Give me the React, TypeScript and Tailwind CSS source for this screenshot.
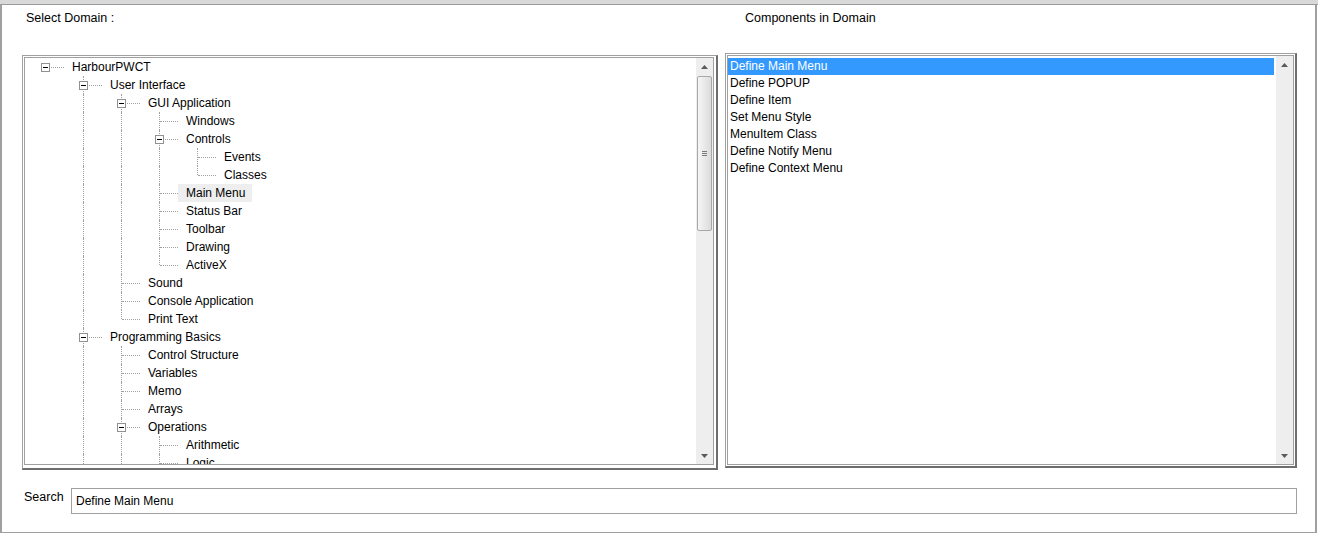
import React from "react";

type Row = {
  depth: number;
  label: string;
  box?: boolean;
  last?: boolean;
  guides: number[];
  active?: boolean;
};

const treeRows: Row[] = [
  { depth: 0, label: "HarbourPWCT", box: true, guides: [] },
  { depth: 1, label: "User Interface", box: true, guides: [0] },
  { depth: 2, label: "GUI Application", box: true, guides: [0, 1] },
  { depth: 3, label: "Windows", guides: [0, 1, 1] },
  { depth: 3, label: "Controls", box: true, guides: [0, 1, 1] },
  { depth: 4, label: "Events", guides: [0, 1, 1, 1] },
  { depth: 4, label: "Classes", last: true, guides: [0, 1, 1, 1] },
  { depth: 3, label: "Main Menu", active: true, guides: [0, 1, 1] },
  { depth: 3, label: "Status Bar", guides: [0, 1, 1] },
  { depth: 3, label: "Toolbar", guides: [0, 1, 1] },
  { depth: 3, label: "Drawing", guides: [0, 1, 1] },
  { depth: 3, label: "ActiveX", last: true, guides: [0, 1, 1] },
  { depth: 2, label: "Sound", guides: [0, 1] },
  { depth: 2, label: "Console Application", guides: [0, 1] },
  { depth: 2, label: "Print Text", last: true, guides: [0, 1] },
  { depth: 1, label: "Programming Basics", box: true, guides: [0] },
  { depth: 2, label: "Control Structure", guides: [0, 1] },
  { depth: 2, label: "Variables", guides: [0, 1] },
  { depth: 2, label: "Memo", guides: [0, 1] },
  { depth: 2, label: "Arrays", guides: [0, 1] },
  { depth: 2, label: "Operations", box: true, guides: [0, 1] },
  { depth: 3, label: "Arithmetic", guides: [0, 1, 1] },
  { depth: 3, label: "Logic", guides: [0, 1, 1] },
];

const components = [
  "Define Main Menu",
  "Define POPUP",
  "Define Item",
  "Set Menu Style",
  "MenuItem Class",
  "Define Notify Menu",
  "Define Context Menu",
];

const Arrow = ({ down }: { down?: boolean }) => (
  <svg width="7" height="4" viewBox="0 0 7 4">
    {down ? (
      <path d="M0 0 H7 L3.5 4 Z" fill="#5a5a5a" />
    ) : (
      <path d="M0 4 H7 L3.5 0 Z" fill="#5a5a5a" />
    )}
  </svg>
);

const TreeRow = ({ row }: { row: Row }) => (
  <div className="flex h-[18px]">
    {row.guides.map((g, i) => (
      <div key={i} className="relative w-[38px] shrink-0">
        {g ? (
          <span className="absolute left-[19px] top-0 h-full border-l border-dotted border-[#a0a0a0]" />
        ) : null}
      </div>
    ))}
    <div className="relative w-[38px] shrink-0">
      {row.depth > 0 && (
        <span
          className={
            row.last
              ? "absolute left-[19px] top-0 h-[9px] border-l border-dotted border-[#a0a0a0]"
              : "absolute left-[19px] top-0 h-full border-l border-dotted border-[#a0a0a0]"
          }
        />
      )}
      <span className="absolute left-[20px] top-[9px] w-[18px] border-t border-dotted border-[#a0a0a0]" />
      {row.box && (
        <span className="absolute left-[15px] top-[5px] w-[9px] h-[9px] bg-white border border-[#919191]">
          <span className="absolute left-[1px] top-[3px] w-[5px] h-px bg-black" />
        </span>
      )}
    </div>
    <span
      className={
        row.active
          ? "pl-[8px] pr-[7px] leading-[18px] whitespace-nowrap bg-[#eeeeee]"
          : "pl-[8px] pr-[7px] leading-[18px] whitespace-nowrap"
      }
    >
      {row.label}
    </span>
  </div>
);

export default function App() {
  return (
    <div className="w-[1318px] h-[535px] bg-white flex flex-col text-[12px] text-black font-['Liberation_Sans',Arial,sans-serif]">
      <div className="h-[5px] bg-[#d9d9d9] border-b border-[#9c9c9c]" />
      <div className="flex-1 mr-px mb-[2px] border-l-2 border-r-2 border-b border-[#a0a0a0] flex flex-col">
        <div className="flex h-[48px] pt-[6px] leading-[14px] text-[12.5px]">
          <div className="w-[743px] pl-[24px]">Select Domain :</div>
          <div>Components in Domain</div>
        </div>

        <div className="flex items-start pl-[20px]">
          <div className="mt-[2px] w-[696px] h-[415px] border-l border-t border-[#a0a0a0] border-r-2 border-b-2 border-r-[#6e6e6e] border-b-[#6e6e6e] pl-px pt-px pr-[2px] pb-[3px]">
            <div className="h-full border border-[#a0a0a0] flex">
              <div className="flex-1 overflow-hidden pl-px">
                {treeRows.map((r, i) => (
                  <TreeRow key={i} row={r} />
                ))}
              </div>
              <div className="w-[17px] bg-[#eeeeee] flex flex-col items-center">
                <div className="h-[17px] flex items-center justify-center">
                  <Arrow />
                </div>
                <div className="mt-px w-[15px] h-[155px] rounded-[2px] border border-[#a8a8a8] bg-gradient-to-r from-[#f6f6f6] to-[#dcdcdc] flex flex-col items-center justify-center gap-[1px]">
                  <span className="w-[5px] h-px bg-[#7a7a7a]" />
                  <span className="w-[5px] h-px bg-[#7a7a7a]" />
                  <span className="w-[5px] h-px bg-[#7a7a7a]" />
                </div>
                <div className="flex-1" />
                <div className="h-[17px] flex items-center justify-center">
                  <Arrow down />
                </div>
              </div>
            </div>
          </div>

          <div className="ml-[7px] w-[572px] h-[415px] border-l border-t border-[#a0a0a0] border-r-2 border-b-2 border-r-[#6e6e6e] border-b-[#6e6e6e] p-px">
            <div className="h-full border border-[#a0a0a0] flex">
              <div className="flex-1 pt-[2px] pr-[2px]">
                {components.map((c, i) => (
                  <div
                    key={c}
                    className={
                      i === 0
                        ? "h-[17px] leading-[17px] pl-[2px] bg-[#3399ff] text-white"
                        : "h-[17px] leading-[17px] pl-[2px]"
                    }
                  >
                    {c}
                  </div>
                ))}
              </div>
              <div className="w-[17px] bg-[#eeeeee] flex flex-col items-center justify-between">
                <div className="h-[17px] flex items-center justify-center">
                  <Arrow />
                </div>
                <div className="h-[17px] flex items-center justify-center">
                  <Arrow down />
                </div>
              </div>
            </div>
          </div>
        </div>

        <div className="flex items-start mt-[18px]">
          <div className="w-[69px] pl-[22px] mt-[2px] leading-[14px] text-[12.5px]">Search</div>
          <div className="w-[1226px] h-[26px] border border-[#a0a0a0] pl-[4px] leading-[24px]">
            Define Main Menu
          </div>
        </div>
      </div>
    </div>
  );
}
